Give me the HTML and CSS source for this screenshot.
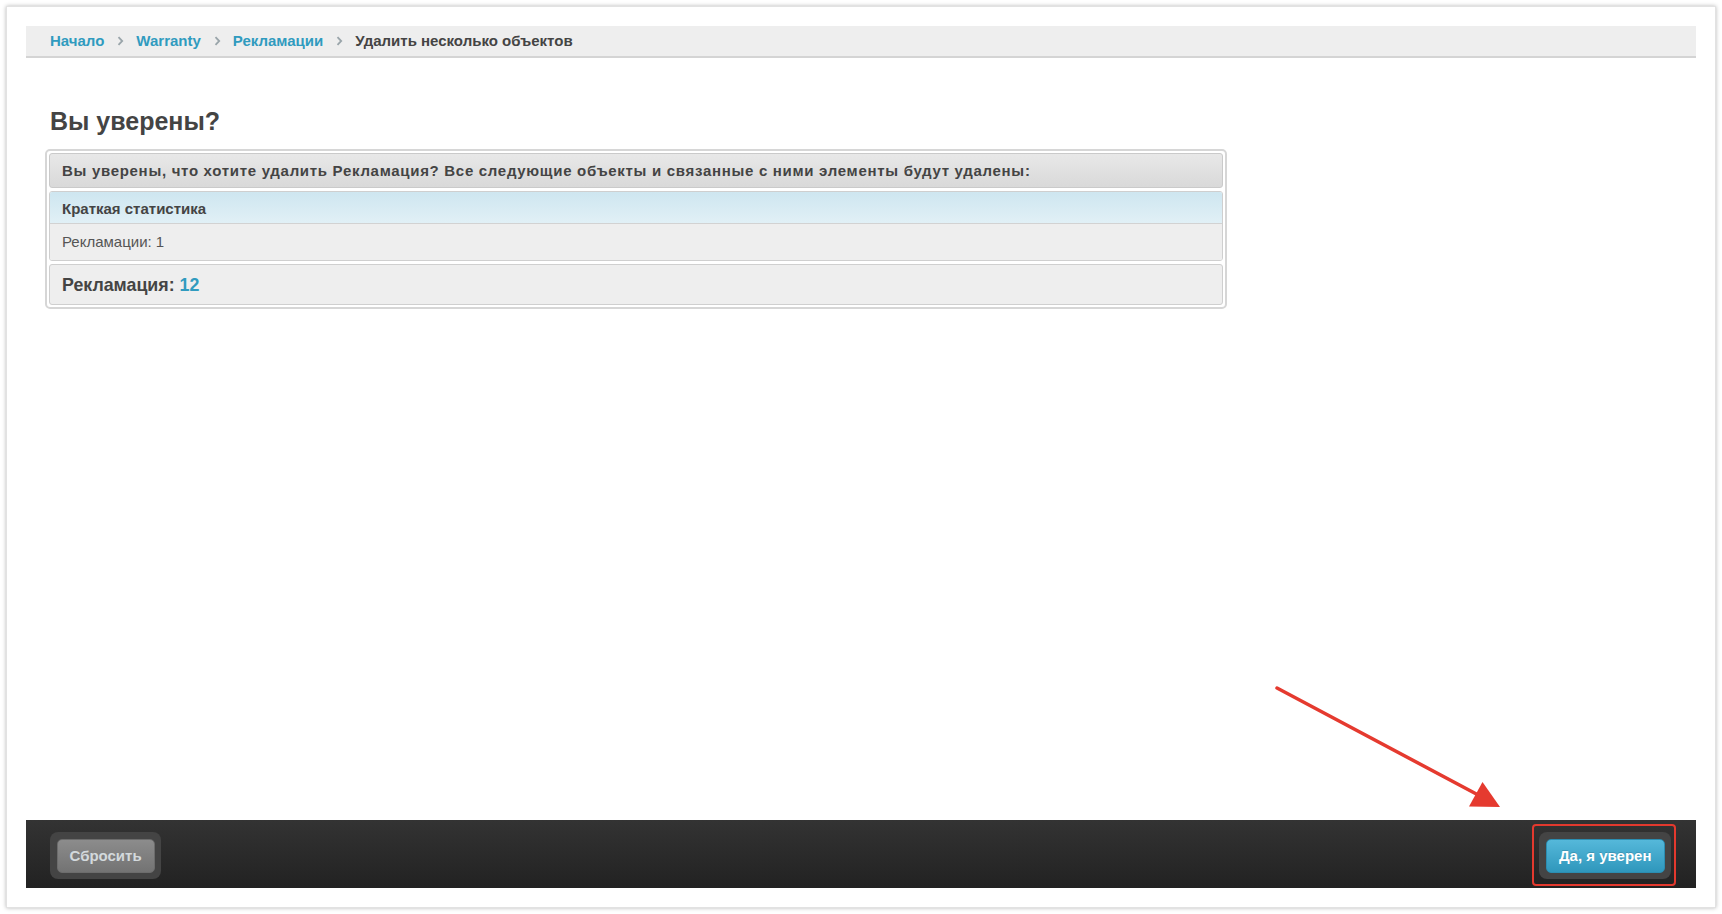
FILE: index.html
```html
<!DOCTYPE html>
<html lang="ru">
<head>
  <meta charset="UTF-8" />
  <meta name="viewport" content="width=device-width, initial-scale=1.0"/>
  <title>Удалить несколько объектов</title>
  <link rel="stylesheet" href="styles.css">
</head>
<body>
  <div class="shot">
    <!-- хлебные крошки -->
    <div class="breadcrumbs">
      <a href="#">Начало</a>
      <svg class="sep" width="7" height="10" viewBox="0 0 7 10"><path d="M1.5 1.2 L5.2 5 L1.5 8.8" /></svg>
      <a href="#">Warranty</a>
      <svg class="sep" width="7" height="10" viewBox="0 0 7 10"><path d="M1.5 1.2 L5.2 5 L1.5 8.8" /></svg>
      <a href="#">Рекламации</a>
      <svg class="sep" width="7" height="10" viewBox="0 0 7 10"><path d="M1.5 1.2 L5.2 5 L1.5 8.8" /></svg>
      <span class="current">Удалить несколько объектов</span>
    </div>

    <div class="content">
      <h1>Вы уверены?</h1>
      <div class="module">
        <h2 class="module-head">Вы уверены, что хотите удалить Рекламация? Все следующие объекты и связанные с ними элементы будут удалены:</h2>
        <div class="group">
          <h3 class="group-head">Краткая статистика</h3>
          <div class="group-row">Рекламации: 1</div>
        </div>
        <div class="object">Рекламация: <a href="#">12</a></div>
      </div>
    </div>

    <!-- нижняя панель -->
    <div class="submit-row">
      <span class="btn-frame"><button class="btn btn-reset">Сбросить</button></span>
      <span class="btn-frame marked"><button class="btn btn-primary">Да, я уверен</button></span>
    </div>
  </div>

  <svg class="pointer" width="1722" height="914" viewBox="0 0 1722 914">
    <line x1="1277" y1="688" x2="1482" y2="797" />
    <polygon points="1500,807 1482.5,782 1469,806.5" />
  </svg>
</body>
</html>
```

FILE: styles.css
```css
html, body {
  margin: 0;
  background: #fff;
}
body {
  font-family: "Liberation Sans", Arial, sans-serif;
  font-size: 15px;
  color: #444;
}
.shot {
  box-sizing: border-box;
  height: 902px;
  margin: 6px;
  padding: 19px;
  border: 1px solid #e2e2e2;
  box-shadow: 0 0 4px rgba(0, 0, 0, 0.28);
  display: flex;
  flex-direction: column;
}
.breadcrumbs {
  display: flex;
  align-items: center;
  height: 30px;
  padding: 0 0 0 24px;
  background: #eee;
  border-bottom: 2px solid #d4d4d4;
  font-size: 15px;
  font-weight: bold;
  line-height: 30px;
}
.breadcrumbs a {
  color: #309bbf;
  text-decoration: none;
}
.breadcrumbs .current {
  color: #444;
}
.sep {
  margin: 0 12px 0 13px;
}
.sep path {
  fill: none;
  stroke: #9aa5aa;
  stroke-width: 1.8;
}
h1 {
  margin: 49px 0 14px 24px;
  font-size: 25px;
  line-height: 28px;
  font-weight: bold;
  color: #444;
}
.module {
  box-sizing: border-box;
  width: 1182px;
  margin-left: 19px;
  padding: 2px;
  border: 2px solid #d6d6d6;
  border-radius: 5px;
  display: flex;
  flex-direction: column;
  gap: 3px;
}
.module-head {
  box-sizing: border-box;
  height: 35px;
  margin: 0;
  padding: 2px 12px 0;
  border: 1px solid #cacaca;
  border-radius: 3px;
  background: linear-gradient(#e8e8e8, #d9d9d9);
  font-size: 15px;
  letter-spacing: 0.7px;
  line-height: 30px;
  color: #444;
}
.group {
  border: 1px solid #cfcfcf;
  border-radius: 3px;
  overflow: hidden;
}
.group-head {
  margin: 0;
  padding: 2px 12px 0;
  line-height: 29px;
  font-size: 15px;
  background: linear-gradient(#cee6f0, #e1f0f6);
  border-bottom: 1px solid #d2d2d2;
  color: #444;
}
.group-row {
  padding: 2.5px 12px 3px;
  line-height: 30px;
  background: #eee;
  color: #555;
}
.object {
  padding: 3px 12px 2px;
  line-height: 34px;
  font-size: 17.8px;
  font-weight: bold;
  background: #eee;
  border: 1px solid #cfcfcf;
  border-radius: 3px;
  color: #444;
}
.object a {
  color: #309bbf;
  text-decoration: none;
}
.submit-row {
  margin-top: auto;
  box-sizing: border-box;
  height: 68px;
  padding: 12px 25px 8px 24px;
  background: linear-gradient(#333, #222);
  display: flex;
  justify-content: space-between;
  align-items: flex-start;
}
.btn-frame {
  position: relative;
  display: inline-block;
  padding: 6.5px;
  background: #444;
  border-radius: 8px;
}
.btn-frame.marked::after {
  content: "";
  position: absolute;
  left: -7.3px;
  right: -5px;
  top: -8px;
  bottom: -7.4px;
  border: 2.8px solid #e3392e;
  border-radius: 4px;
}
.btn {
  display: block;
  height: 34px;
  padding: 0 12px;
  border-radius: 5px;
  font-family: "Liberation Sans", Arial, sans-serif;
  font-size: 15px;
  font-weight: bold;
  line-height: 32px;
  cursor: pointer;
}
.btn-reset {
  color: #d3d9dc;
  background: linear-gradient(#8c8c8c, #737373);
  border: 1px solid #6c6c6c;
}
.btn-primary {
  color: #fff;
  background: linear-gradient(#55b8da, #2f97bc);
  border: 1px solid #2b8db1;
  text-shadow: 0 -1px 0 rgba(0, 0, 0, 0.15);
}
.pointer {
  position: absolute;
  left: 0;
  top: 0;
  pointer-events: none;
}
.pointer line {
  stroke: #e53a2f;
  stroke-width: 3.5;
  stroke-linecap: round;
}
.pointer polygon {
  fill: #e53a2f;
}
```
